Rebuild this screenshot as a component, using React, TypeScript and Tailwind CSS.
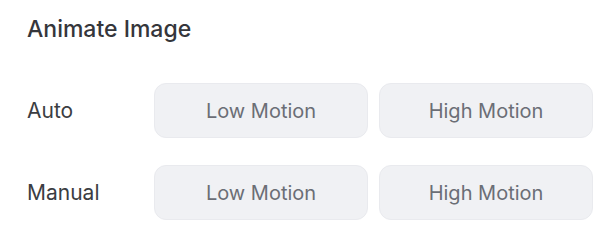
const modes = ['Auto', 'Manual'];

export default function App() {
  return (
    <div className="w-[614px] h-[244px] bg-white pl-[27px] pt-[15px] font-['Inter',sans-serif]">
      <h2 className="text-[23px] leading-[29px] font-medium text-[#35363b]">Animate Image</h2>
      <div className="mt-[39px] flex flex-col gap-[27px]">
        {modes.map((mode) => (
          <div key={mode} className="flex items-center">
            <span className="w-[127px] text-[21px] text-[#3b3d42]">{mode}</span>
            <div className="flex gap-[11px]">
              <button className="w-[214px] h-[55px] rounded-xl bg-[#f0f1f4] border border-[#e9eaee] text-[20px] text-[#6b6e76]">
                Low Motion
              </button>
              <button className="w-[214px] h-[55px] rounded-xl bg-[#f0f1f4] border border-[#e9eaee] text-[20px] text-[#6b6e76]">
                High Motion
              </button>
            </div>
          </div>
        ))}
      </div>
    </div>
  );
}
